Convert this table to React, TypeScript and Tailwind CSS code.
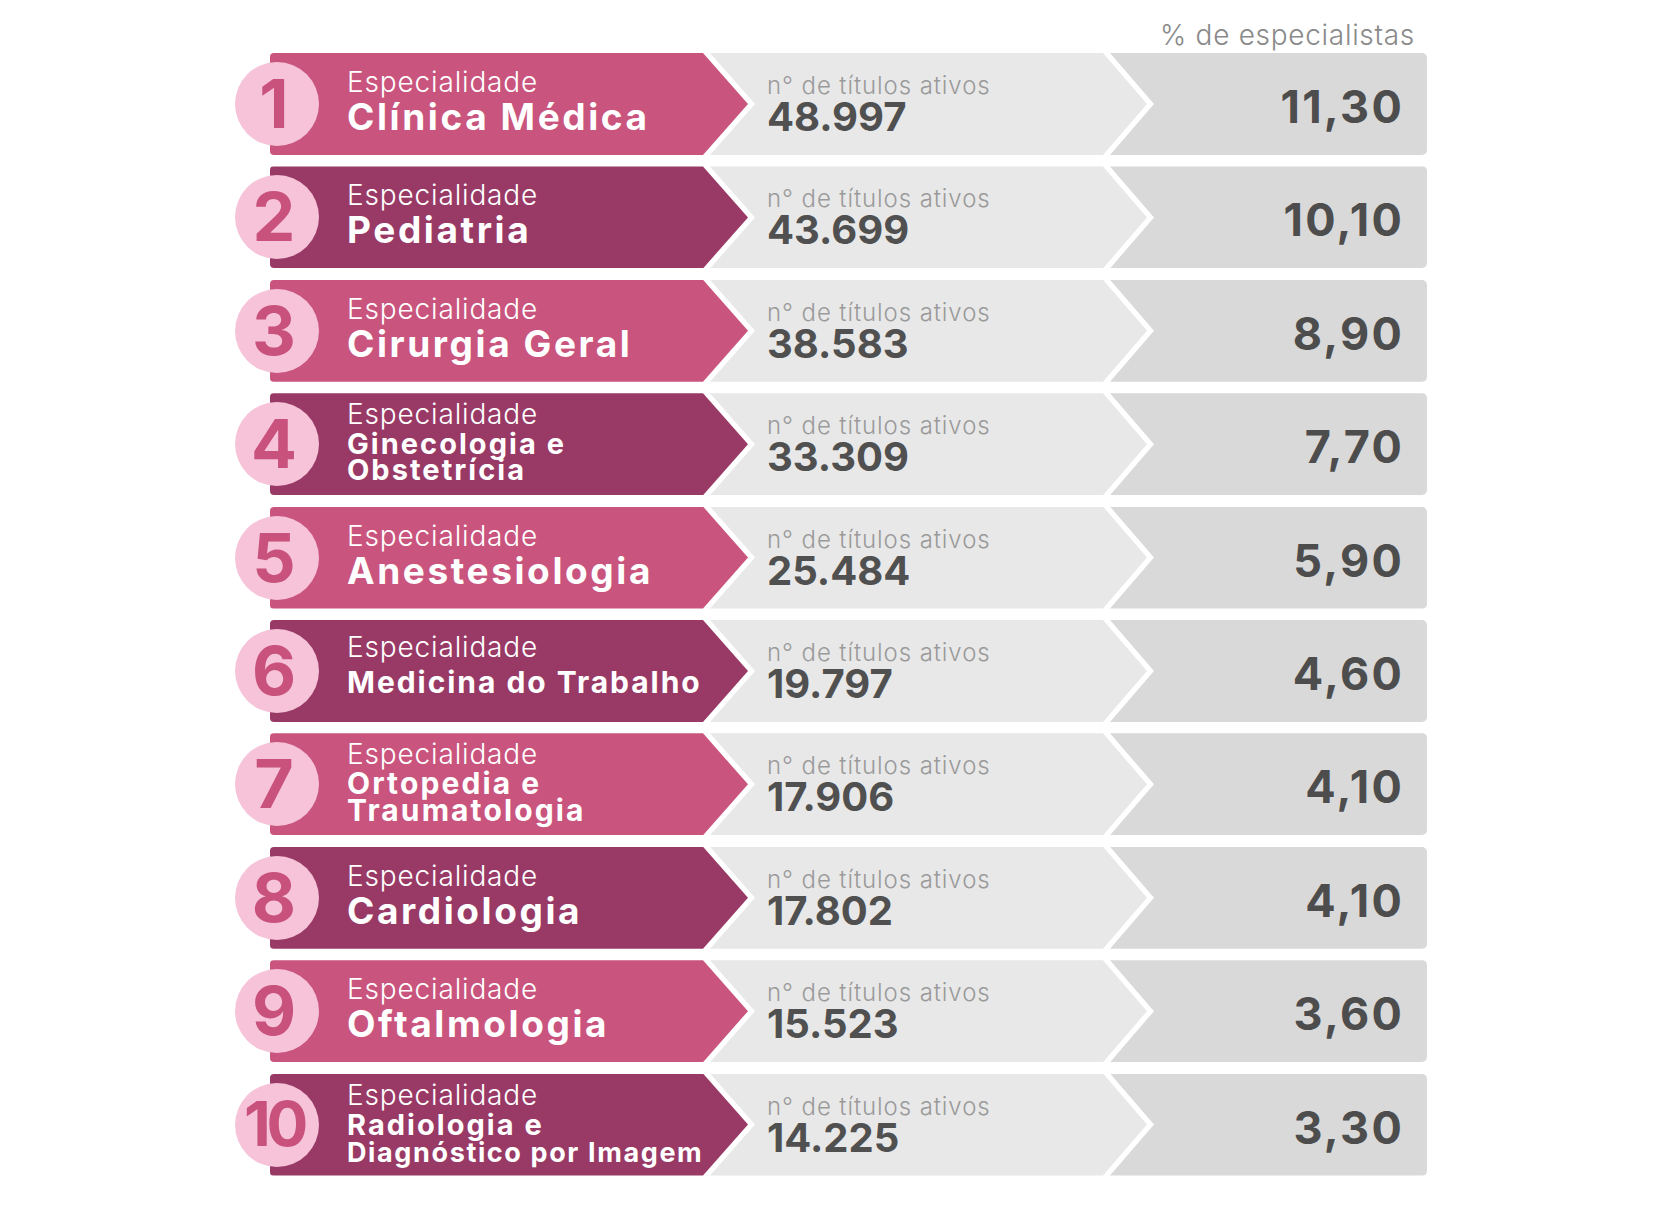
import React from "react";

type Line = { t: string; c: string };
type Row = {
  n: string;
  name: Line[];
  wrapCls: string;
  blockCls: string;
  titles: string;
  pct: string;
  dark: boolean;
  numCls: string;
};

const BIG = "text-[37px] leading-[38px] tracking-[0.07em]";

const rows: Row[] = [
  { n: "1", name: [{ t: "Clínica Médica", c: BIG }], wrapCls: "mt-[1px]", blockCls: "pt-[14px]", titles: "48.997", pct: "11,30", dark: false, numCls: "text-[68px]" },
  { n: "2", name: [{ t: "Pediatria", c: BIG }], wrapCls: "mt-[1px]", blockCls: "pt-[14px]", titles: "43.699", pct: "10,10", dark: true, numCls: "text-[68px]" },
  { n: "3", name: [{ t: "Cirurgia Geral", c: BIG }], wrapCls: "mt-[1px]", blockCls: "pt-[14px]", titles: "38.583", pct: "8,90", dark: false, numCls: "text-[68px]" },
  {
    n: "4",
    name: [
      { t: "Ginecologia e", c: "text-[29px] leading-[26px] tracking-[0.07em]" },
      { t: "Obstetrícia", c: "text-[29px] leading-[26px] tracking-[0.07em]" },
    ],
    wrapCls: "mt-[2px]",
    blockCls: "pt-[6px]",
    titles: "33.309",
    pct: "7,70",
    dark: true,
    numCls: "text-[68px]",
  },
  { n: "5", name: [{ t: "Anestesiologia", c: BIG }], wrapCls: "mt-[1px]", blockCls: "pt-[14px]", titles: "25.484", pct: "5,90", dark: false, numCls: "text-[68px]" },
  { n: "6", name: [{ t: "Medicina do Trabalho", c: "text-[30px] leading-[36px] tracking-[0.065em]" }], wrapCls: "mt-[2px]", blockCls: "pt-[12px]", titles: "19.797", pct: "4,60", dark: true, numCls: "text-[68px]" },
  {
    n: "7",
    name: [
      { t: "Ortopedia e", c: "text-[30px] leading-[26px] tracking-[0.07em]" },
      { t: "Traumatologia", c: "text-[30px] leading-[29px] tracking-[0.07em]" },
    ],
    wrapCls: "mt-[1px]",
    blockCls: "pt-[6px]",
    titles: "17.906",
    pct: "4,10",
    dark: false,
    numCls: "text-[68px]",
  },
  { n: "8", name: [{ t: "Cardiologia", c: BIG }], wrapCls: "mt-[1px]", blockCls: "pt-[14px]", titles: "17.802", pct: "4,10", dark: true, numCls: "text-[68px]" },
  { n: "9", name: [{ t: "Oftalmologia", c: BIG }], wrapCls: "mt-[1px]", blockCls: "pt-[14px]", titles: "15.523", pct: "3,60", dark: false, numCls: "text-[68px]" },
  {
    n: "10",
    name: [
      { t: "Radiologia e", c: "text-[29px] leading-[26px] tracking-[0.07em]" },
      { t: "Diagnóstico por Imagem", c: "text-[27px] leading-[29px] tracking-[0.06em]" },
    ],
    wrapCls: "mt-[2px]",
    blockCls: "pt-[6px]",
    titles: "14.225",
    pct: "3,30",
    dark: true,
    numCls: "text-[62px] tracking-[-0.07em]",
  },
];

function RowItem({ r }: { r: Row }) {
  return (
    <div className="flex h-[102px] items-center">
      <div
        className={`relative z-10 flex h-[84px] w-[84px] shrink-0 items-center justify-center rounded-full bg-[#f6c3d8] font-bold leading-none text-[#c8527c] ${r.numCls}`}
      >
        <span className="-mt-[2px] pr-[6px]">{r.n}</span>
      </div>
      <div className="-ml-[49px] flex h-full">
        <div
          className={`flex h-full w-[478px] shrink-0 flex-col rounded-l-[4px] pl-[77px] text-white [clip-path:polygon(0_0,calc(100%_-_45px)_0,100%_50%,calc(100%_-_45px)_100%,0_100%)] ${
            r.dark ? "bg-[#993a66]" : "bg-[#c9547d]"
          } ${r.blockCls}`}
        >
          <div className="text-[28px] font-light leading-[30px] tracking-[0.03em]">Especialidade</div>
          <div className={`font-bold ${r.wrapCls}`}>
            {r.name.map((l) => (
              <div key={l.t} className={`whitespace-nowrap ${l.c}`}>
                {l.t}
              </div>
            ))}
          </div>
        </div>
        <div className="-ml-[38px] flex h-full w-[437px] shrink-0 flex-col bg-[#e8e8e8] pl-[57px] pt-[19px] [clip-path:polygon(0_0,calc(100%_-_44px)_0,100%_50%,calc(100%_-_44px)_100%,0_100%,45px_50%)]">
          <div className="text-[24px] font-light leading-[28px] tracking-[0.038em] text-[#9a9a9a]">n° de títulos ativos</div>
          <div className="text-[40px] font-bold leading-[34px] text-[#505050]">{r.titles}</div>
        </div>
        <div className="-ml-[37px] flex h-full w-[317px] shrink-0 items-center justify-end rounded-r-[5px] bg-[#d9d9d9] pr-[23px] pt-[5px] [clip-path:polygon(0_0,100%_0,100%_100%,0_100%,44px_50%)]">
          <span className="text-[45px] font-bold leading-none tracking-[0.05em] text-[#4d4d4d]">{r.pct}</span>
        </div>
      </div>
    </div>
  );
}

export default function App() {
  return (
    <div className="min-h-[1225px] w-full bg-white font-['Inter','Liberation_Sans',sans-serif]">
      <div className="ml-[235px] w-[1192px] pt-[18px]">
        <div className="h-[34px] pr-[12px] text-right text-[28px] font-light leading-[34px] tracking-[0.025em] text-[#8a8a8a]">
          % de especialistas
        </div>
        <div className="mt-[1px] flex flex-col gap-[11.4px]">
          {rows.map((r) => (
            <RowItem key={r.n} r={r} />
          ))}
        </div>
      </div>
    </div>
  );
}
